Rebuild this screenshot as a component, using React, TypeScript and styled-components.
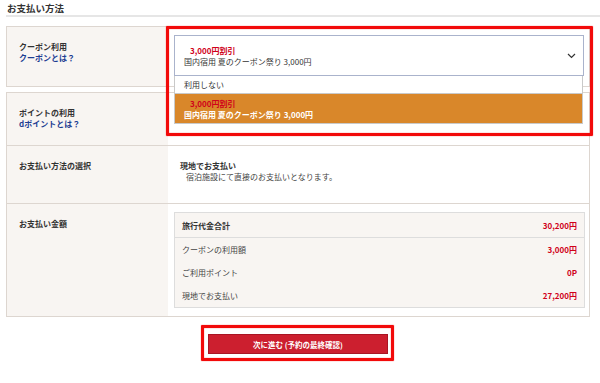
import styled, { createGlobalStyle } from 'styled-components';

const GlobalStyle = createGlobalStyle`
    body {
        margin: 0;
        background: #fff;
        color: #333;
        font-family: "Noto Sans CJK JP", "Noto Sans", "Liberation Sans", sans-serif;
        font-size: 8px;
    }
`;

const summary = [
    { label: 'クーポンの利用額', value: '3,000円' },
    { label: 'ご利用ポイント', value: '0P' },
    { label: '現地でお支払い', value: '27,200円' },
];

const App = () => {
    return (
        <Page>
            <GlobalStyle />
            <Heading>お支払い方法</Heading>

            <Row $h={61} $gap>
                <Label>
                    <div>クーポン利用</div>
                    <HelpLink>クーポンとは？</HelpLink>
                </Label>
                <SelectCell>
                    <SelectWrap>
                        <SelectBox>
                            <Discount>3,000円割引</Discount>
                            <OptionName>国内宿用 夏のクーポン祭り 3,000円</OptionName>
                            <Chevron width="9" height="6" viewBox="0 0 9 6">
                                <polyline points="1,1 4.5,4.5 8,1" fill="none" stroke="#333" strokeWidth="1.2" />
                            </Chevron>
                        </SelectBox>
                        <OptionList>
                            <PlainOption>利用しない</PlainOption>
                            <ActiveOption>
                                <Discount>3,000円割引</Discount>
                                <OptionName $light>国内宿用 夏のクーポン祭り 3,000円</OptionName>
                            </ActiveOption>
                        </OptionList>
                    </SelectWrap>
                    <Marker style={{ top: -1, left: -2, right: -4, bottom: -50 }} />
                </SelectCell>
            </Row>

            <Group>
                <Row $h={54}>
                    <Label>
                        <div>ポイントの利用</div>
                        <HelpLink>dポイントとは？</HelpLink>
                    </Label>
                    <Cell />
                </Row>
                <Row $h={58}>
                    <Label>お支払い方法の選択</Label>
                    <TextCell>
                        <Strong>現地でお支払い</Strong>
                        <Note>宿泊施設にて直接のお支払いとなります。</Note>
                    </TextCell>
                </Row>
                <Row $h={113}>
                    <Label>お支払い金額</Label>
                    <SummaryCell>
                        <Summary>
                            <SummaryHead>
                                <span>旅行代金合計</span>
                                <Price>30,200円</Price>
                            </SummaryHead>
                            {summary.map((item) => (
                                <SummaryRow key={item.label}>
                                    <span>{item.label}</span>
                                    <Price>{item.value}</Price>
                                </SummaryRow>
                            ))}
                        </Summary>
                    </SummaryCell>
                </Row>
            </Group>

            <Actions>
                <ButtonWrap>
                    <NextButton>次に進む (予約の最終確認)</NextButton>
                    <Marker style={{ top: -9, left: -7, right: -6, bottom: -7 }} />
                </ButtonWrap>
            </Actions>
        </Page>
    );
};
export default App;

const Page = styled.div`
    width: 584px;
    padding: 0 10px 20px 6px;
`;

const Heading = styled.h2`
    margin: 0 -10px 9px 0;
    height: 17px;
    padding: 3px 0 0 1px;
    box-sizing: border-box;
    border-bottom: 2px solid #e6e6e6;
    font-size: 9.5px;
    line-height: 11px;
    font-weight: 700;
    color: #333;
`;

const Group = styled.div``;

const Row = styled.div<{ $h: number; $gap?: boolean }>`
    display: grid;
    grid-template-columns: 161px 1fr;
    box-sizing: border-box;
    min-height: ${(p) => p.$h}px;
    border: 1px solid #ddd6d0;
    margin-bottom: ${(p) => (p.$gap ? '5px' : '0')};

    & + & {
        border-top: none;
    }
`;

const Label = styled.div`
    background: #f8f5f2;
    padding: 14px 12px;
    line-height: 11px;
    font-weight: 700;
    color: #333;
`;

const HelpLink = styled.a`
    display: block;
    color: #1d3d92;
    font-weight: 700;
    cursor: pointer;
`;

const Cell = styled.div`
    background: #fff;
`;

const SelectCell = styled(Cell)`
    position: relative;
    padding: 8px 5px 9px 6px;
`;

const SelectWrap = styled.div`
    position: relative;
    z-index: 2;
`;

const SelectBox = styled.div`
    position: relative;
    height: 41px;
    box-sizing: border-box;
    border: 1px solid #aab3cc;
    padding: 9px 0 0 9px;
    background: #fff;
    line-height: 11px;
`;

const Discount = styled.div`
    padding-left: 6px;
    color: #d0021b;
    font-weight: 700;
`;

const OptionName = styled.div<{ $light?: boolean }>`
    color: ${(p) => (p.$light ? '#fff' : '#333')};
    font-weight: ${(p) => (p.$light ? 700 : 400)};
`;

const Chevron = styled.svg`
    position: absolute;
    right: 7px;
    top: 17px;
`;

const OptionList = styled.div`
    position: absolute;
    top: 100%;
    left: 0;
    right: 1px;
    border: 1px solid #c9c9c9;
    border-top: none;
    background: #fff;
    line-height: 11px;
`;

const PlainOption = styled.div`
    height: 18px;
    box-sizing: border-box;
    padding: 3px 9px 0;
    border-bottom: 1px solid #c9c9c9;
`;

const ActiveOption = styled.div`
    height: 29px;
    box-sizing: border-box;
    padding: 4px 9px 0;
    background: #d9872a;
`;

const Marker = styled.span`
    position: absolute;
    z-index: 3;
    border: 3px solid #f20a0a;
    border-radius: 1px;
    pointer-events: none;
    box-shadow: 0 0 1px #f20a0a, inset 0 0 1px #f20a0a;
`;

const TextCell = styled(Cell)`
    padding: 14px 12px;
    line-height: 11px;
`;

const Strong = styled.div`
    font-weight: 700;
`;

const Note = styled.div`
    padding-left: 6px;
    color: #444;
`;

const SummaryCell = styled(Cell)`
    padding: 8px 4px 7px 6px;
`;

const Summary = styled.div`
    border: 1px solid #ddd;
    background: #f8f5f2;
    line-height: 11px;
`;

const SummaryHead = styled.div`
    display: flex;
    justify-content: space-between;
    align-items: center;
    height: 24px;
    padding: 0 7px;
    border-bottom: 1px solid #ddd;
    font-weight: 700;
`;

const SummaryRow = styled.div`
    display: flex;
    justify-content: space-between;
    align-items: center;
    height: 23px;
    padding: 0 7px;
    color: #444;
`;

const Price = styled.span`
    color: #d0021b;
    font-weight: 700;
`;

const Actions = styled.div`
    display: flex;
    justify-content: center;
    padding-top: 17px;
`;

const ButtonWrap = styled.div`
    position: relative;
`;

const NextButton = styled.button`
    display: block;
    width: 180px;
    height: 20px;
    border: 1px solid #a91524;
    background: #cc1f2f;
    color: #fff;
    font-family: inherit;
    font-size: 7.5px;
    font-weight: 700;
    cursor: pointer;
`;
